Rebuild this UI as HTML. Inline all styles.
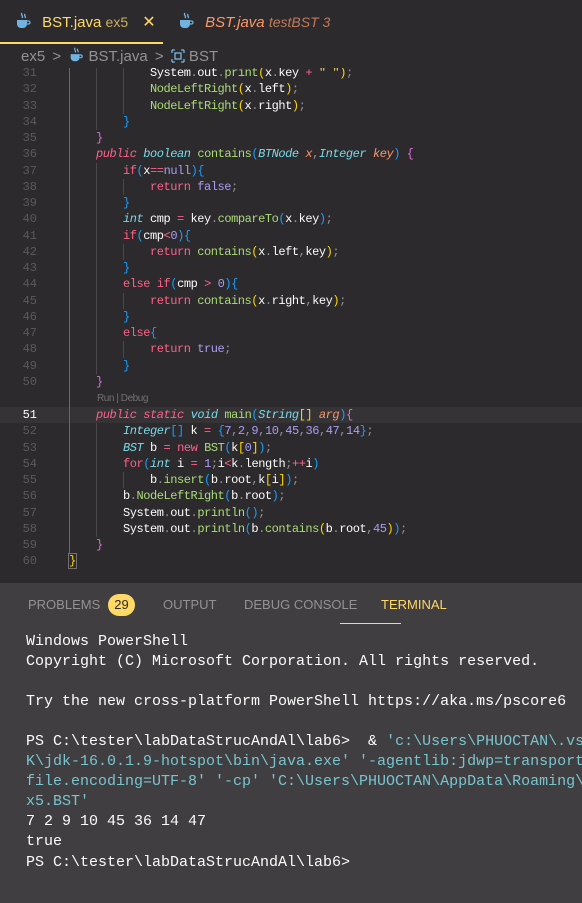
<!DOCTYPE html>
<html><head><meta charset="utf-8"><style>
*{margin:0;padding:0;box-sizing:border-box}
body{width:582px;height:903px;overflow:hidden;background:#2d2a2e;font-family:"Liberation Sans",sans-serif;position:relative}
.tabs{position:absolute;left:0;top:0;width:582px;height:44px;background:#2d2a2e}
.tab{position:absolute;top:0;height:44px;font-size:15px;line-height:44px;white-space:nowrap}
.ul{position:absolute;left:0;top:42px;width:163px;height:2px;background:#ffd866}
.crumb{position:absolute;top:46px;height:22px;font-size:15px;line-height:22px;color:#939293;white-space:nowrap}
.ed{position:absolute;left:0;top:68px;width:582px;height:512px;overflow:hidden}
.code{position:absolute;left:0;top:-3px;width:582px;font-family:"Liberation Mono",monospace;font-size:12px;letter-spacing:-0.45px;color:#fcfcfa}
.l{height:16.25px;line-height:16.25px;white-space:pre;position:relative}
.ln{position:absolute;left:0;width:37px;text-align:right;color:#5b595c;letter-spacing:0}
.c{position:absolute;left:69px;top:0;height:100%}
.g{display:inline-block;width:27px;height:16.25px;vertical-align:top;border-left:1px solid #4a474b}
.g0{border-left-color:#7a6b36}
.cl{height:17px;line-height:17px;position:relative;font-family:"Liberation Sans",sans-serif;font-size:10px;color:#727072}
.k{color:#ff6188}.ki{color:#ff6188;font-style:italic}.t{color:#78dce8;font-style:italic}.p{color:#fc9867;font-style:italic}
.f{color:#a9dc76}.n{color:#ab9df2}.o{color:#939293}
.b1{color:#ffd700}.b2{color:#da70d6}.b3{color:#179fff}.s{color:#ffd866}
.cur{background:#363337}
.panel{position:absolute;left:0;top:582px;width:582px;height:321px;background:#403e41;border-top:1px solid #2d2a2e}
.pt{position:absolute;top:14px;font-size:13px;color:#939293;line-height:16px;white-space:nowrap}
.term{position:absolute;left:26px;top:49px;font-family:"Liberation Mono",monospace;font-size:15px;line-height:20.05px;color:#fcfcfa;white-space:pre}
.cy{color:#78c5d0}
</style></head><body>
<div class="tabs">
  <div class="tab" style="left:14px">
    <svg width="18" height="18" viewBox="0 0 18 18" style="vertical-align:-3px"><path d="M8 1c-2 2 2 3 0 5M11 2c-1.5 1.5 1.5 2.5 0 4" stroke="#6fb3e0" stroke-width="1.3" fill="none"/><path d="M3 8h10v4a4 4 0 0 1-4 4h-2a4 4 0 0 1-4-4z" fill="#6fb3e0"/><path d="M13 9h1.5a1.5 1.5 0 0 1 0 3H13" stroke="#6fb3e0" stroke-width="1.3" fill="none"/></svg>
    <span style="color:#ffd866;margin-left:6px">BST.java</span> <span style="color:#c9b060;font-size:14px">ex5</span> <span style="color:#ffd866;margin-left:10px;font-size:16px">✕</span>
  </div>
  <div class="tab" style="left:177px">
    <svg width="18" height="18" viewBox="0 0 18 18" style="vertical-align:-3px"><path d="M8 1c-2 2 2 3 0 5M11 2c-1.5 1.5 1.5 2.5 0 4" stroke="#6fb3e0" stroke-width="1.3" fill="none"/><path d="M3 8h10v4a4 4 0 0 1-4 4h-2a4 4 0 0 1-4-4z" fill="#6fb3e0"/><path d="M13 9h1.5a1.5 1.5 0 0 1 0 3H13" stroke="#6fb3e0" stroke-width="1.3" fill="none"/></svg>
    <span style="color:#fc9867;font-style:italic;margin-left:6px">BST.java</span> <span style="color:#c07a58;font-style:italic;font-size:14px">testBST 3</span>
  </div>
  <div class="ul"></div>
</div>
<div class="crumb" style="left:21px">ex5 <span style="margin:0 3px">&gt;</span>
<svg width="16" height="16" viewBox="0 0 18 18" style="vertical-align:-2px"><path d="M8 1c-2 2 2 3 0 5M11 2c-1.5 1.5 1.5 2.5 0 4" stroke="#6fb3e0" stroke-width="1.3" fill="none"/><path d="M3 8h10v4a4 4 0 0 1-4 4h-2a4 4 0 0 1-4-4z" fill="#6fb3e0"/><path d="M13 9h1.5a1.5 1.5 0 0 1 0 3H13" stroke="#6fb3e0" stroke-width="1.3" fill="none"/></svg>
 BST.java <span style="margin:0 3px">&gt;</span>
<svg width="14" height="14" viewBox="0 0 14 14" style="vertical-align:-2px"><path d="M1 1h3M1 1v3M13 1h-3M13 1v3M1 13h3M1 13v-3M13 13h-3M13 13v-3" stroke="#78b8e0" stroke-width="1.3" fill="none"/><rect x="4" y="4" width="6" height="6" stroke="#78b8e0" stroke-width="1.3" fill="none"/></svg>
 BST</div>

<div class="ed"><div class="code">
<div class="l"><span class="ln">31</span><span class="c"><span class="g g0"></span><span class="g"></span><span class="g"></span>System<span class="o">.</span>out<span class="o">.</span><span class="f">print</span><span class="b1">(</span>x<span class="o">.</span>key <span class="k">+</span> <span class="s">" "</span><span class="b1">)</span><span class="o">;</span></span></div>
<div class="l"><span class="ln">32</span><span class="c"><span class="g g0"></span><span class="g"></span><span class="g"></span><span class="f">NodeLeftRight</span><span class="b1">(</span>x<span class="o">.</span>left<span class="b1">)</span><span class="o">;</span></span></div>
<div class="l"><span class="ln">33</span><span class="c"><span class="g g0"></span><span class="g"></span><span class="g"></span><span class="f">NodeLeftRight</span><span class="b1">(</span>x<span class="o">.</span>right<span class="b1">)</span><span class="o">;</span></span></div>
<div class="l"><span class="ln">34</span><span class="c"><span class="g g0"></span><span class="g"></span><span class="b3">}</span></span></div>
<div class="l"><span class="ln">35</span><span class="c"><span class="g g0"></span><span class="b2">}</span></span></div>
<div class="l"><span class="ln">36</span><span class="c"><span class="g g0"></span><span class="ki">public</span> <span class="t">boolean</span> <span class="f">contains</span><span class="b3">(</span><span class="t">BTNode</span> <span class="p">x</span><span class="o">,</span><span class="t">Integer</span> <span class="p">key</span><span class="b3">)</span> <span class="b2">{</span></span></div>
<div class="l"><span class="ln">37</span><span class="c"><span class="g g0"></span><span class="g"></span><span class="k">if</span><span class="b3">(</span>x<span class="k">==</span><span class="n">null</span><span class="b3">){</span></span></div>
<div class="l"><span class="ln">38</span><span class="c"><span class="g g0"></span><span class="g"></span><span class="g"></span><span class="k">return</span> <span class="n">false</span><span class="o">;</span></span></div>
<div class="l"><span class="ln">39</span><span class="c"><span class="g g0"></span><span class="g"></span><span class="b3">}</span></span></div>
<div class="l"><span class="ln">40</span><span class="c"><span class="g g0"></span><span class="g"></span><span class="t">int</span> cmp <span class="k">=</span> key<span class="o">.</span><span class="f">compareTo</span><span class="b3">(</span>x<span class="o">.</span>key<span class="b3">)</span><span class="o">;</span></span></div>
<div class="l"><span class="ln">41</span><span class="c"><span class="g g0"></span><span class="g"></span><span class="k">if</span><span class="b3">(</span>cmp<span class="k">&lt;</span><span class="n">0</span><span class="b3">){</span></span></div>
<div class="l"><span class="ln">42</span><span class="c"><span class="g g0"></span><span class="g"></span><span class="g"></span><span class="k">return</span> <span class="f">contains</span><span class="b1">(</span>x<span class="o">.</span>left<span class="o">,</span>key<span class="b1">)</span><span class="o">;</span></span></div>
<div class="l"><span class="ln">43</span><span class="c"><span class="g g0"></span><span class="g"></span><span class="b3">}</span></span></div>
<div class="l"><span class="ln">44</span><span class="c"><span class="g g0"></span><span class="g"></span><span class="k">else</span> <span class="k">if</span><span class="b3">(</span>cmp <span class="k">&gt;</span> <span class="n">0</span><span class="b3">){</span></span></div>
<div class="l"><span class="ln">45</span><span class="c"><span class="g g0"></span><span class="g"></span><span class="g"></span><span class="k">return</span> <span class="f">contains</span><span class="b1">(</span>x<span class="o">.</span>right<span class="o">,</span>key<span class="b1">)</span><span class="o">;</span></span></div>
<div class="l"><span class="ln">46</span><span class="c"><span class="g g0"></span><span class="g"></span><span class="b3">}</span></span></div>
<div class="l"><span class="ln">47</span><span class="c"><span class="g g0"></span><span class="g"></span><span class="k">else</span><span class="b3">{</span></span></div>
<div class="l"><span class="ln">48</span><span class="c"><span class="g g0"></span><span class="g"></span><span class="g"></span><span class="k">return</span> <span class="n">true</span><span class="o">;</span></span></div>
<div class="l"><span class="ln">49</span><span class="c"><span class="g g0"></span><span class="g"></span><span class="b3">}</span></span></div>
<div class="l"><span class="ln">50</span><span class="c"><span class="g g0"></span><span class="b2">}</span></span></div>
<div class="cl"><span class="c" style="border-left:1px solid #7a6b36;padding-left:27px">Run | Debug</span></div>
<div class="l cur"><span class="ln" style="color:#fcfcfa">51</span><span class="c"><span class="g g0"></span><span class="ki">public</span> <span class="ki">static</span> <span class="t">void</span> <span class="f">main</span><span class="b3">(</span><span class="t">String</span><span class="b1">[]</span> <span class="p">arg</span><span class="b3">)</span><span class="b2">{</span></span></div>
<div class="l"><span class="ln">52</span><span class="c"><span class="g g0"></span><span class="g"></span><span class="t">Integer</span><span class="b3">[]</span> k <span class="k">=</span> <span class="b3">{</span><span class="n">7</span><span class="o">,</span><span class="n">2</span><span class="o">,</span><span class="n">9</span><span class="o">,</span><span class="n">10</span><span class="o">,</span><span class="n">45</span><span class="o">,</span><span class="n">36</span><span class="o">,</span><span class="n">47</span><span class="o">,</span><span class="n">14</span><span class="b3">}</span><span class="o">;</span></span></div>
<div class="l"><span class="ln">53</span><span class="c"><span class="g g0"></span><span class="g"></span><span class="t">BST</span> b <span class="k">=</span> <span class="k">new</span> <span class="f">BST</span><span class="b3">(</span>k<span class="b1">[</span><span class="n">0</span><span class="b1">]</span><span class="b3">)</span><span class="o">;</span></span></div>
<div class="l"><span class="ln">54</span><span class="c"><span class="g g0"></span><span class="g"></span><span class="k">for</span><span class="b3">(</span><span class="t">int</span> i <span class="k">=</span> <span class="n">1</span><span class="o">;</span>i<span class="k">&lt;</span>k<span class="o">.</span>length<span class="o">;</span><span class="k">++</span>i<span class="b3">)</span></span></div>
<div class="l"><span class="ln">55</span><span class="c"><span class="g g0"></span><span class="g"></span><span class="g"></span>b<span class="o">.</span><span class="f">insert</span><span class="b3">(</span>b<span class="o">.</span>root<span class="o">,</span>k<span class="b1">[</span>i<span class="b1">]</span><span class="b3">)</span><span class="o">;</span></span></div>
<div class="l"><span class="ln">56</span><span class="c"><span class="g g0"></span><span class="g"></span>b<span class="o">.</span><span class="f">NodeLeftRight</span><span class="b3">(</span>b<span class="o">.</span>root<span class="b3">)</span><span class="o">;</span></span></div>
<div class="l"><span class="ln">57</span><span class="c"><span class="g g0"></span><span class="g"></span>System<span class="o">.</span>out<span class="o">.</span><span class="f">println</span><span class="b3">()</span><span class="o">;</span></span></div>
<div class="l"><span class="ln">58</span><span class="c"><span class="g g0"></span><span class="g"></span>System<span class="o">.</span>out<span class="o">.</span><span class="f">println</span><span class="b3">(</span>b<span class="o">.</span><span class="f">contains</span><span class="b1">(</span>b<span class="o">.</span>root<span class="o">,</span><span class="n">45</span><span class="b1">)</span><span class="b3">)</span><span class="o">;</span></span></div>
<div class="l"><span class="ln">59</span><span class="c"><span class="g g0"></span><span class="b2">}</span></span></div>
<div class="l"><span class="ln">60</span><span class="c"><span class="b1" style="outline:1px solid #727072">}</span></span></div>
</div></div>

<div class="panel">
  <div class="pt" style="left:28px">PROBLEMS</div>
  <div style="position:absolute;left:108px;top:11px;width:27px;height:22px;border-radius:11px;background:#ffd866;color:#2d2a2e;font-size:13px;line-height:22px;text-align:center">29</div>
  <div class="pt" style="left:163px">OUTPUT</div>
  <div class="pt" style="left:244px">DEBUG CONSOLE</div>
  <div class="pt" style="left:381px;color:#ffd866">TERMINAL</div>
  <div style="position:absolute;left:340px;top:40px;width:61px;height:1px;background:#ffd866"></div>
  <div class="term">Windows PowerShell
Copyright (C) Microsoft Corporation. All rights reserved.

Try the new cross-platform PowerShell https://aka.ms/pscore6

PS C:\tester\labDataStrucAndAl\lab6>  &amp; <span class="cy">'c:\Users\PHUOCTAN\.vs</span>
<span class="cy">K\jdk-16.0.1.9-hotspot\bin\java.exe' '-agentlib:jdwp=transport</span>
<span class="cy">file.encoding=UTF-8' '-cp' 'C:\Users\PHUOCTAN\AppData\Roaming\</span>
<span class="cy">x5.BST'</span>
7 2 9 10 45 36 14 47
true
PS C:\tester\labDataStrucAndAl\lab6></div>
</div>
</body></html>
